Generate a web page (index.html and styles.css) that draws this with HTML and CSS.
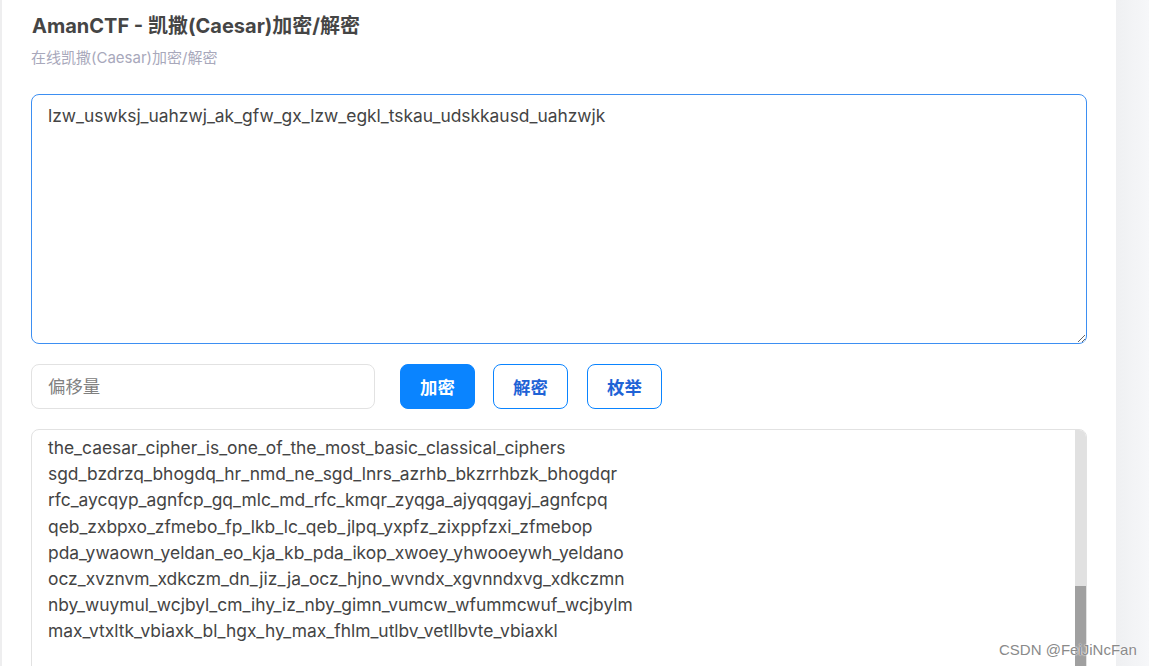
FILE: index.html
```html
<!DOCTYPE html>
<html lang="zh-CN">
<head>
<meta charset="utf-8">
<title>AmanCTF - 凯撒(Caesar)加密/解密</title>
<link rel="stylesheet" href="styles.css">
</head>
<body>
<div class="page">
  <main class="card">
    <h1 class="title">AmanCTF - 凯撒(Caesar)加密/解密</h1>
    <p class="subtitle">在线凯撒(Caesar)加密/解密</p>
    <textarea class="input-area" spellcheck="false" autofocus>lzw_uswksj_uahzwj_ak_gfw_gx_lzw_egkl_tskau_udskkausd_uahzwjk</textarea>
    <div class="controls">
      <input class="offset" type="text" placeholder="偏移量">
      <button class="btn btn-primary">加密</button>
      <button class="btn btn-outline">解密</button>
      <button class="btn btn-outline btn-last">枚举</button>
    </div>
    <div class="output">
      <div class="output-lines">
        <div>the_caesar_cipher_is_one_of_the_most_basic_classical_ciphers</div>
        <div>sgd_bzdrzq_bhogdq_hr_nmd_ne_sgd_lnrs_azrhb_bkzrrhbzk_bhogdqr</div>
        <div>rfc_aycqyp_agnfcp_gq_mlc_md_rfc_kmqr_zyqga_ajyqqgayj_agnfcpq</div>
        <div>qeb_zxbpxo_zfmebo_fp_lkb_lc_qeb_jlpq_yxpfz_zixppfzxi_zfmebop</div>
        <div>pda_ywaown_yeldan_eo_kja_kb_pda_ikop_xwoey_yhwooeywh_yeldano</div>
        <div>ocz_xvznvm_xdkczm_dn_jiz_ja_ocz_hjno_wvndx_xgvnndxvg_xdkczmn</div>
        <div>nby_wuymul_wcjbyl_cm_ihy_iz_nby_gimn_vumcw_wfummcwuf_wcjbylm</div>
        <div>max_vtxltk_vbiaxk_bl_hgx_hy_max_fhlm_utlbv_vetllbvte_vbiaxkl</div>
      </div>
      <div class="scrollbar"><div class="thumb"></div></div>
    </div>
  </main>
  <div class="watermark">CSDN @FeiJiNcFan</div>
</div>
</body>
</html>
```

FILE: styles.css
```css
* { box-sizing: border-box; }
html, body {
  margin: 0;
  height: 100%;
  overflow: hidden;
}
body {
  background: #f3f4f6;
  font-family: Inter, "Noto Sans CJK SC", sans-serif;
  color: #444;
}
.page {
  display: flex;
  height: 666px;
  padding-left: 2px;
  background: #eeeeef;
}
.card {
  width: 1114px;
  flex-shrink: 0;
  background: #fff;
  padding: 12px 29px 0 29px;
  display: flex;
  flex-direction: column;
}
.card > * { flex-shrink: 0; }
.page::after {
  content: "";
  flex: 1;
  background: linear-gradient(to right, #eff0f2, #f6f7f9);
}
.title {
  margin: 0;
  font-size: 20px;
  font-weight: 700;
  line-height: 28px;
  color: #454545;
  padding-left: 1px;
}
.subtitle {
  margin: 8px 0 0 0;
  font-size: 15px;
  line-height: 20px;
  color: #a8a8bb;
}
.input-area {
  margin-top: 26px;
  height: 250px;
  width: 100%;
  border: 1px solid #3d8ff2;
  border-radius: 8px;
  padding: 9px 16px;
  font-family: Inter, "Noto Sans CJK SC", sans-serif;
  font-size: 17.4px;
  line-height: 24px;
  color: #444;
  outline: none;
  resize: vertical;
}
.controls {
  margin-top: 20px;
  display: flex;
  align-items: center;
}
.offset {
  width: 344px;
  height: 45px;
  border: 1px solid #e2e2e2;
  border-radius: 8px;
  padding: 0 16px;
  font-family: Inter, "Noto Sans CJK SC", sans-serif;
  font-size: 17.4px;
  outline: none;
  color: #444;
}
.offset::placeholder { color: #808080; }
.btn {
  height: 45px;
  width: 75px;
  border-radius: 8px;
  font-family: "Noto Sans CJK SC", sans-serif;
  font-size: 17.4px;
  font-weight: 700;
  cursor: pointer;
  margin-left: 18px;
  padding: 0;
}
.btn-last { margin-left: 19px; }
.btn-primary {
  margin-left: 25px;
  background: #0a84ff;
  border: 1px solid #0a84ff;
  color: #fff;
}
.btn-outline {
  background: #fff;
  border: 1px solid #0a84ff;
  color: #1f63d6;
}
.output {
  position: relative;
  margin-top: 20px;
  height: 260px;
  border: 1px solid #e2e2e2;
  border-radius: 8px;
  overflow: hidden;
}
.output-lines {
  padding: 5px 16px;
  font-size: 17.4px;
  line-height: 26.2px;
  color: #444;
}
.scrollbar {
  position: absolute;
  top: 0;
  right: 0;
  width: 11px;
  bottom: 0;
  background: #e1e1e1;
}
.thumb {
  position: absolute;
  top: 156px;
  left: 0;
  right: 0;
  height: 120px;
  background: #a0a0a0;
}
.watermark {
  position: absolute;
  left: 999px;
  top: 641px;
  font-family: "Liberation Sans", Arial, sans-serif;
  font-size: 15px;
  color: #8a8a8a;
  text-shadow: 0 0 2px #fff, 0 0 1px #fff;
}
```
